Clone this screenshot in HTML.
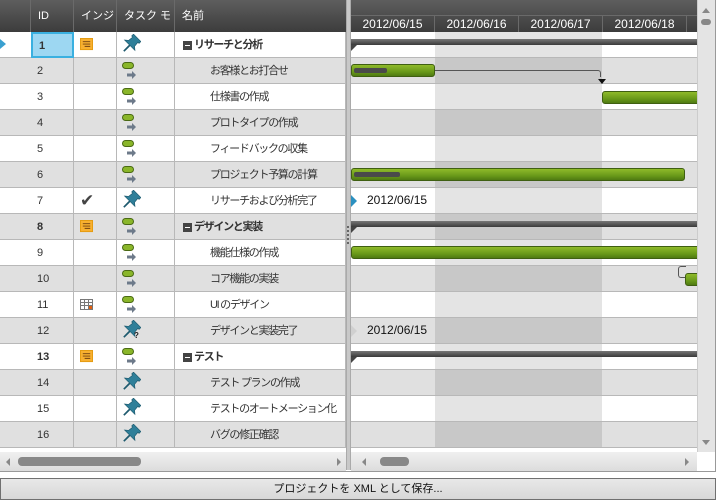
<!DOCTYPE html>
<html><head><meta charset="utf-8"><style>
*{margin:0;padding:0;box-sizing:border-box}
body{width:716px;height:500px;overflow:hidden;background:#fff;font-family:"Liberation Sans","Noto Sans CJK JP",sans-serif;font-size:11px;color:#333;position:relative}
.a{position:absolute}
.hdr{left:0;top:0;width:697px;height:32px;background:linear-gradient(#5e5e5e,#3c3c3c);color:#fff;font-size:11px}
.hc{position:absolute;top:0;height:32px;line-height:32px;border-right:1px solid #6a6a6a;padding-left:7px}
.dt{position:absolute;top:16px;width:84px;height:16px;line-height:16px;text-align:center;border-right:1px solid #6a6a6a;font-size:12px}
.row{position:absolute;left:0;width:697px;height:26px;border-bottom:1px solid #b8b8b8}
.w{background:#fff}.g{background:#e0e0e0}
.c{position:absolute;top:0;height:25px;line-height:26px;border-right:1px solid #b8b8b8}
.id{left:31px;width:43px;padding-left:6px}
.ic{left:74px;width:43px}
.tm{left:117px;width:58px}
.nm{left:175px;width:171px;letter-spacing:-1.3px}
.sh{position:absolute;top:0;left:435px;width:167px;height:25px}
.w .sh{background:#e4e4e4}.g .sh{background:#c8c8c8}
.bar{position:absolute;height:13px;border:1px solid #3f5f12;border-radius:3px;background:linear-gradient(#8fba2a,#6a9a1a 60%,#4f7a12)}
.prog{position:absolute;left:2px;top:3px;height:5px;background:#4a4a4a;border-radius:2px}
.sum{position:absolute;left:351px;top:7px;width:346px;height:6px;background:linear-gradient(#777,#3a3a3a)}
.sumt{position:absolute;left:351px;top:13px;width:0;height:0;border-left:6px solid #444;border-bottom:6px solid transparent}
.b{font-weight:bold}
.nm span{position:absolute}
</style></head><body>
<svg width="0" height="0" style="position:absolute">
<defs>
<symbol id="pin" viewBox="0 0 20 20"><g transform="rotate(45 10 10)"><path d="M5 1 H15 V3.5 H13.5 L14 8.5 L17 11 H3 L6 8.5 L6.5 3.5 H5 Z" fill="#2f7f99" stroke="#1e5a6e" stroke-width=".6"/><path d="M10 11 V19" stroke="#1e5a6e" stroke-width="1.6"/></g></symbol>
<symbol id="task" viewBox="0 0 20 20"><rect x="1.5" y="1.5" width="11" height="6" rx="3" fill="#8ab62a" stroke="#4a6a14"/><path d="M6 8 V12.5 H11 V10 L15 14 L11 18 V15.5 H6 Z" fill="#6d7a8a"/></symbol>
<symbol id="note" viewBox="0 0 14 14"><rect x="0.5" y="0.5" width="13" height="12" fill="#f8b030" stroke="#e49a10"/><path d="M3 4h8M3 6.5h8M5 9h6" stroke="#704010" stroke-width="1"/></symbol>
</defs></svg>

<div class="a hdr">
<div class="hc" style="left:0;width:31px"></div>
<div class="hc" style="left:31px;width:43px">ID</div>
<div class="hc" style="left:74px;width:43px;overflow:hidden;white-space:nowrap">インジ</div>
<div class="hc" style="left:117px;width:58px">タスク モ</div>
<div class="hc" style="left:175px;width:171px;border-right:none">名前</div>
<div class="a" style="left:351px;top:0;width:346px;height:16px;border-bottom:1px solid #6a6a6a"></div>
<div class="dt" style="left:351px">2012/06/15</div>
<div class="dt" style="left:435px">2012/06/16</div>
<div class="dt" style="left:519px">2012/06/17</div>
<div class="dt" style="left:603px">2012/06/18</div>
</div>

<div class="row w" style="top:32px"><div class="sh"></div><div class="a" style="left:0;top:7px;width:0;height:0;border-left:6px solid #3aa0d0;border-top:5px solid transparent;border-bottom:5px solid transparent"></div>
<div class="c id b" style="background:#9dd7f2;border:2px solid #3ab0e0;height:26px;line-height:24px">1</div>
<div class="c ic"><svg class="a" style="left:6px;top:6px" width="13" height="13"><use href="#note"/></svg></div>
<div class="c tm"><svg class="a" style="left:3px;top:2px" width="21" height="21"><use href="#pin"/></svg></div>
<div class="c nm b"><span style="left:8px;top:9px;width:9px;height:9px;background:#444"></span><span style="left:10px;top:13px;width:5px;height:1px;background:#fff"></span><span style="left:19px">リサーチと分析</span></div>
<div class="sum"></div><div class="sumt"></div></div>

<div class="row g" style="top:58px"><div class="sh"></div><div class="c id">2</div><div class="c ic"></div>
<div class="c tm"><svg class="a" style="left:4px;top:3px" width="20" height="20"><use href="#task"/></svg></div>
<div class="c nm"><span style="left:35px">お客様とお打合せ</span></div>
<div class="bar" style="left:351px;top:6px;width:84px"><div class="prog" style="width:33px"></div></div>
<div class="a" style="left:435px;top:12px;width:166px;height:7px;border-top:1px solid #555;border-right:1px solid #555;border-top-right-radius:3px"></div>
<div class="a" style="left:598px;top:21px;width:0;height:0;border-top:5px solid #111;border-left:4px solid transparent;border-right:4px solid transparent"></div></div>

<div class="row w" style="top:84px"><div class="sh"></div><div class="c id">3</div><div class="c ic"></div>
<div class="c tm"><svg class="a" style="left:4px;top:3px" width="20" height="20"><use href="#task"/></svg></div>
<div class="c nm"><span style="left:35px">仕様書の作成</span></div>
<div class="bar" style="left:602px;top:7px;width:100px"></div></div>

<div class="row g" style="top:110px"><div class="sh"></div><div class="c id">4</div><div class="c ic"></div>
<div class="c tm"><svg class="a" style="left:4px;top:3px" width="20" height="20"><use href="#task"/></svg></div>
<div class="c nm"><span style="left:35px">プロトタイプの作成</span></div></div>

<div class="row w" style="top:136px"><div class="sh"></div><div class="c id">5</div><div class="c ic"></div>
<div class="c tm"><svg class="a" style="left:4px;top:3px" width="20" height="20"><use href="#task"/></svg></div>
<div class="c nm"><span style="left:35px">フィードバックの収集</span></div></div>

<div class="row g" style="top:162px"><div class="sh"></div><div class="c id">6</div><div class="c ic"></div>
<div class="c tm"><svg class="a" style="left:4px;top:3px" width="20" height="20"><use href="#task"/></svg></div>
<div class="c nm"><span style="left:35px">プロジェクト予算の計算</span></div>
<div class="bar" style="left:351px;top:6px;width:334px"><div class="prog" style="width:46px"></div></div></div>

<div class="row w" style="top:188px"><div class="sh"></div><div class="c id">7</div>
<div class="c ic"><span style="position:absolute;left:6px;top:0;font-size:17px;color:#444">✔</span></div>
<div class="c tm"><svg class="a" style="left:3px;top:2px" width="21" height="21"><use href="#pin"/></svg></div>
<div class="c nm"><span style="left:35px">リサーチおよび分析完了</span></div>
<div class="a" style="left:351px;top:7px;width:0;height:0;border-left:6px solid #2a90c0;border-top:6px solid transparent;border-bottom:6px solid transparent"></div>
<div class="a" style="left:367px;top:0;line-height:25px;font-size:12px;color:#111">2012/06/15</div></div>

<div class="row g" style="top:214px"><div class="sh"></div><div class="c id b">8</div>
<div class="c ic"><svg class="a" style="left:6px;top:6px" width="13" height="13"><use href="#note"/></svg></div>
<div class="c tm"><svg class="a" style="left:4px;top:3px" width="20" height="20"><use href="#task"/></svg></div>
<div class="c nm b"><span style="left:8px;top:9px;width:9px;height:9px;background:#444"></span><span style="left:10px;top:13px;width:5px;height:1px;background:#fff"></span><span style="left:19px">デザインと実装</span></div>
<div class="sum"></div><div class="sumt"></div></div>

<div class="row w" style="top:240px"><div class="sh"></div><div class="c id">9</div><div class="c ic"></div>
<div class="c tm"><svg class="a" style="left:4px;top:3px" width="20" height="20"><use href="#task"/></svg></div>
<div class="c nm"><span style="left:35px">機能仕様の作成</span></div>
<div class="bar" style="left:351px;top:6px;width:352px"></div></div>

<div class="row g" style="top:266px"><div class="sh"></div><div class="c id">10</div><div class="c ic"></div>
<div class="c tm"><svg class="a" style="left:4px;top:3px" width="20" height="20"><use href="#task"/></svg></div>
<div class="c nm"><span style="left:35px">コア機能の実装</span></div>
<div class="a" style="left:678px;top:0;width:8px;height:12px;border:1px solid #555;border-right:none;border-radius:3px 0 0 3px"></div>
<div class="bar" style="left:685px;top:7px;width:20px"></div></div>

<div class="row w" style="top:292px"><div class="sh"></div><div class="c id">11</div>
<div class="c ic"><svg class="a" style="left:6px;top:7px" width="13" height="11"><rect x=".5" y=".5" width="12" height="10" fill="#fff" stroke="#777"/><path d="M.5 3.5h12M.5 6.5h12M4.5 .5v10M8.5 .5v10" stroke="#777"/><rect x="9" y="7" width="3" height="3" fill="#e06010"/></svg></div>
<div class="c tm"><svg class="a" style="left:4px;top:3px" width="20" height="20"><use href="#task"/></svg></div>
<div class="c nm"><span style="left:35px">UI のデザイン</span></div></div>

<div class="row g" style="top:318px"><div class="sh"></div><div class="c id">12</div><div class="c ic"></div>
<div class="c tm"><svg class="a" style="left:3px;top:2px" width="21" height="21"><use href="#pin"/></svg><span style="position:absolute;left:17px;top:5px;font-size:8px;font-weight:bold;color:#222">?</span></div>
<div class="c nm"><span style="left:35px">デザインと実装完了</span></div>
<div class="a" style="left:351px;top:7px;width:0;height:0;border-left:6px solid #d0d0d0;border-top:6px solid transparent;border-bottom:6px solid transparent"></div>
<div class="a" style="left:367px;top:0;line-height:25px;font-size:12px;color:#111">2012/06/15</div></div>

<div class="row w" style="top:344px"><div class="sh"></div><div class="c id b">13</div>
<div class="c ic"><svg class="a" style="left:6px;top:6px" width="13" height="13"><use href="#note"/></svg></div>
<div class="c tm"><svg class="a" style="left:4px;top:3px" width="20" height="20"><use href="#task"/></svg></div>
<div class="c nm b"><span style="left:8px;top:9px;width:9px;height:9px;background:#444"></span><span style="left:10px;top:13px;width:5px;height:1px;background:#fff"></span><span style="left:19px">テスト</span></div>
<div class="sum"></div><div class="sumt"></div></div>

<div class="row g" style="top:370px"><div class="sh"></div><div class="c id">14</div><div class="c ic"></div>
<div class="c tm"><svg class="a" style="left:3px;top:2px" width="21" height="21"><use href="#pin"/></svg></div>
<div class="c nm"><span style="left:35px">テスト プランの作成</span></div></div>

<div class="row w" style="top:396px"><div class="sh"></div><div class="c id">15</div><div class="c ic"></div>
<div class="c tm"><svg class="a" style="left:3px;top:2px" width="21" height="21"><use href="#pin"/></svg></div>
<div class="c nm"><span style="left:35px;white-space:nowrap">テストのオートメーション化</span></div></div>

<div class="row g" style="top:422px"><div class="sh"></div><div class="c id">16</div><div class="c ic"></div>
<div class="c tm"><svg class="a" style="left:3px;top:2px" width="21" height="21"><use href="#pin"/></svg></div>
<div class="c nm"><span style="left:35px">バグの修正確認</span></div></div>

<div class="a" style="left:346px;top:0;width:5px;height:470px;background:#c8c8c8;border-left:1px solid #aaa;border-right:1px solid #aaa"></div>
<div class="a" style="left:347px;top:226px;width:2px;height:18px;border-left:2px dotted #666"></div>

<div class="a" style="left:697px;top:0;width:19px;height:452px;background:#e4e4e4;border-left:1px solid #ccc"></div>
<div class="a" style="left:702px;top:8px;width:0;height:0;border-bottom:5px solid #888;border-left:4px solid transparent;border-right:4px solid transparent"></div>
<div class="a" style="left:701px;top:19px;width:10px;height:6px;background:#888;border-radius:3px"></div>
<div class="a" style="left:702px;top:440px;width:0;height:0;border-top:5px solid #888;border-left:4px solid transparent;border-right:4px solid transparent"></div>

<div class="a" style="left:0;top:452px;width:346px;height:19px;background:linear-gradient(#f0f0f0,#dcdcdc)"></div>
<div class="a" style="left:6px;top:458px;width:0;height:0;border-right:4px solid #888;border-top:4px solid transparent;border-bottom:4px solid transparent"></div>
<div class="a" style="left:18px;top:457px;width:123px;height:9px;background:#888;border-radius:4px"></div>
<div class="a" style="left:337px;top:458px;width:0;height:0;border-left:4px solid #888;border-top:4px solid transparent;border-bottom:4px solid transparent"></div>
<div class="a" style="left:351px;top:452px;width:346px;height:19px;background:linear-gradient(#f0f0f0,#dcdcdc)"></div>
<div class="a" style="left:362px;top:458px;width:0;height:0;border-right:4px solid #888;border-top:4px solid transparent;border-bottom:4px solid transparent"></div>
<div class="a" style="left:380px;top:457px;width:29px;height:9px;background:#888;border-radius:4px"></div>
<div class="a" style="left:685px;top:458px;width:0;height:0;border-left:4px solid #888;border-top:4px solid transparent;border-bottom:4px solid transparent"></div>
<div class="a" style="left:0;top:471px;width:716px;height:1px;background:#999"></div>
<div class="a" style="left:715px;top:0;width:1px;height:472px;background:#999"></div>

<div class="a" style="left:0;top:478px;width:716px;height:22px;background:linear-gradient(#e8e8e8,#d8d8d8);border:1px solid #707070;text-align:center;line-height:20px;font-size:11px;color:#111">プロジェクトを XML として保存...</div>
</body></html>
